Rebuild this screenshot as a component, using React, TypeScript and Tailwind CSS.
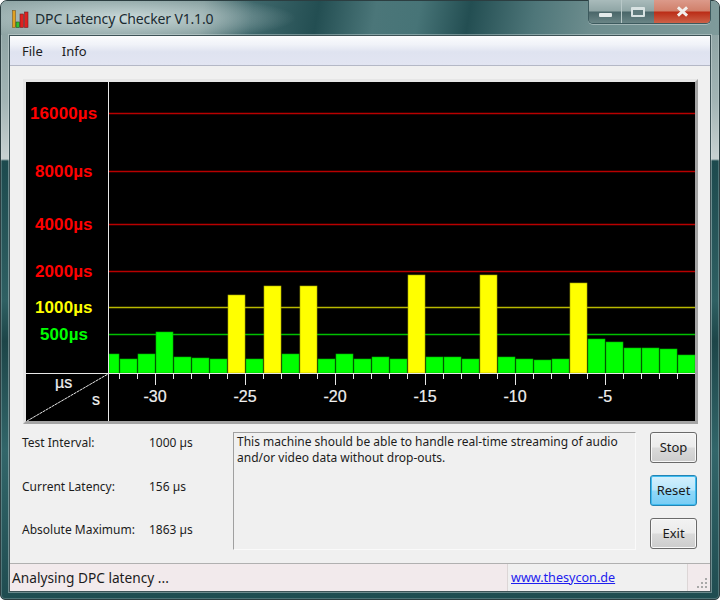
const bars = [
  [109, 10, 354, 0], [120, 17, 359, 0], [138, 17, 354, 0], [156, 17, 332, 0], [174, 17, 357, 0], [192, 17, 358, 0],
  [210, 17, 359, 0], [228, 17, 295, 1], [246, 17, 359, 0], [264, 17, 286, 1], [282, 17, 354, 0], [300, 17, 286, 1],
  [318, 17, 359, 0], [336, 17, 354, 0], [354, 17, 359, 0], [372, 17, 357, 0], [390, 17, 359, 0], [408, 17, 275, 1],
  [426, 17, 357, 0], [444, 17, 357, 0], [462, 17, 359, 0], [480, 17, 275, 1], [498, 17, 357, 0], [516, 17, 359, 0],
  [534, 17, 360, 0], [552, 17, 359, 0], [570, 17, 283, 1], [588, 17, 339, 0], [606, 17, 342, 0], [624, 17, 348, 0],
  [642, 17, 348, 0], [660, 17, 349, 0], [678, 17, 355, 0],
]

const levels = [
  { y: 113.5, label: "16000µs", x: 30, line: "#b80000", text: "#ff0000" },
  { y: 171.5, label: "8000µs", x: 35, line: "#b80000", text: "#ff0000" },
  { y: 224.5, label: "4000µs", x: 35, line: "#b80000", text: "#ff0000" },
  { y: 271.5, label: "2000µs", x: 35, line: "#b80000", text: "#ff0000" },
  { y: 307.5, label: "1000µs", x: 35, line: "#b8b800", text: "#ffff00" },
  { y: 334.5, label: "500µs", x: 40, line: "#00c000", text: "#00ff00" },
]

const seconds = [
  { x: 155, label: "-30" },
  { x: 245, label: "-25" },
  { x: 335, label: "-20" },
  { x: 425, label: "-15" },
  { x: 515, label: "-10" },
  { x: 605, label: "-5" },
]

function Chart() {
  const ticks = []
  for (let x = 119; x < 690; x += 18) ticks.push(x)
  return (
    <svg viewBox="26 82 669 339" className="block h-[339px] w-[669px] bg-black">
      {levels.map(l => (
        <g key={l.label}>
          <line x1="108" x2="695" y1={l.y} y2={l.y} stroke={l.line} strokeWidth="1.5" />
          <text x={l.x} y={l.y + 5} fill={l.text} fontSize="17" fontWeight="bold" letterSpacing="0.1" fontFamily="Liberation Sans">{l.label}</text>
        </g>
      ))}
      {bars.map(([x, w, top, high]) => (
        <rect key={x} x={x} y={top} width={w} height={373 - top} fill={high ? "#ffff00" : "#00ff00"} stroke={high ? "#a8a800" : "#00b000"} strokeWidth="0.6" />
      ))}
      <line x1="108.5" x2="108.5" y1="82" y2="421" stroke="#e8e8e8" />
      <line x1="26" x2="695" y1="373.5" y2="373.5" stroke="#e8e8e8" />
      <line x1="27" x2="108" y1="421" y2="374" stroke="#e8e8e8" strokeDasharray="3 0.6" />
      {ticks.map(x => (
        <line key={x} x1={x + 0.5} x2={x + 0.5} y1="374" y2={(x - 119) % 90 === 36 ? 385 : 379} stroke="#e8e8e8" />
      ))}
      {seconds.map(s => (
        <text key={s.label} x={s.x} y="402" fill="#f0f0f0" stroke="#f0f0f0" strokeWidth="0.2" fontSize="16" textAnchor="middle" fontFamily="Liberation Sans">{s.label}</text>
      ))}
      <text x="55" y="388" fill="#f0f0f0" stroke="#f0f0f0" strokeWidth="0.2" fontSize="16" fontFamily="Liberation Sans">µs</text>
      <text x="92" y="405" fill="#f0f0f0" stroke="#f0f0f0" strokeWidth="0.2" fontSize="16" fontFamily="Liberation Sans">s</text>
    </svg>
  )
}

function AppIcon() {
  return (
    <svg viewBox="0 0 18 18" className="h-[18px] w-[18px] shrink-0">
      <rect x="0.5" y="0.5" width="3" height="17" fill="#e0a020" stroke="#7a5a20" strokeWidth="0.6" />
      <rect x="4" y="12" width="3.5" height="5.5" fill="#30c030" stroke="#205020" strokeWidth="0.6" />
      <rect x="8" y="4" width="3.5" height="13.5" fill="#e02020" stroke="#702020" strokeWidth="0.6" />
      <rect x="12.5" y="2" width="3.5" height="15.5" fill="#e02020" stroke="#702020" strokeWidth="0.6" />
    </svg>
  )
}

function WindowButtons() {
  return (
    <div className="-mt-px flex h-[24px] self-start overflow-hidden rounded-b-[5px] border border-t-0 border-[#3d5a5e] shadow-[0_1px_0_rgba(255,255,255,0.35)]">
      <div className="flex w-[33px] items-center justify-center border-r border-[#b8c8c8] bg-[linear-gradient(#a9bbbb_0%,#8fa5a5_48%,#4a6669_52%,#6a8586_100%)]">
        <div className="mt-[7px] h-[4px] w-[13px] rounded-[1px] bg-[#e4eaea]" />
      </div>
      <div className="flex w-[32px] items-center justify-center bg-[linear-gradient(#a9bbbb_0%,#8fa5a5_48%,#4a6669_52%,#6a8586_100%)]">
        <div className="h-[10px] w-[14px] rounded-[1px] border-[2px] border-t-[3px] border-[#d8e2e2] bg-[#5f7a7c]" />
      </div>
      <div className="flex w-[56px] items-center justify-center bg-[linear-gradient(#dc9a8a_0%,#d07f6a_48%,#bb2c16_52%,#cc6248_100%)]">
        <svg viewBox="0 0 14 12" className="h-[11px] w-[13px]">
          <path d="M2 1.5 12 10.5M12 1.5 2 10.5" stroke="#f2efec" strokeWidth="3.2" fill="none" />
        </svg>
      </div>
    </div>
  )
}

function PushButton({ label, active }: { label: string; active?: boolean }) {
  return (
    <button
      className={active
        ? "h-[31px] w-[47px] rounded-[3px] border border-[#2484b4] bg-[linear-gradient(#d4f0fd_0%,#b8e6fb_48%,#90d8f9_52%,#78ccf4_100%)] text-[13px] text-[#1a1a1a] shadow-[inset_0_0_0_1px_#3fbcf0]"
        : "h-[31px] w-[47px] rounded-[3px] border border-[#6a6a6a] bg-[linear-gradient(#f2f2f2_0%,#ebebeb_48%,#dadada_52%,#cccccc_100%)] text-[13px] text-[#1a1a1a] shadow-[inset_0_0_0_1px_#f8f8f8]"}
    >
      {label}
    </button>
  )
}

const stats = [
  ["Test Interval:", "1000 µs"],
  ["Current Latency:", "156 µs"],
  ["Absolute Maximum:", "1863 µs"],
]

export default function App() {
  return (
    <div className="flex h-[600px] w-[720px] flex-col rounded-t-[7px] rounded-b-[5px] border border-[#2c3e41] bg-[linear-gradient(180deg,#7f9797_0px,#8ea4a4_30px,#a3b5b5_100px,#c8d2d2_158px,#1d4a4e_160px,#2f6063_300px,#1d4548_340px,#32666a_450px,#1f4c50_600px)] font-['Noto_Sans',sans-serif] text-[12px] text-[#1c1c1c] shadow-[inset_0_0_0_1px_rgba(220,230,230,0.25)]">
      <div className="flex h-[34px] shrink-0 rounded-t-[6px] bg-[radial-gradient(ellipse_170px_24px_at_125px_17px,rgba(205,220,220,0.95),rgba(205,220,220,0)),linear-gradient(100deg,#8fa5a5_0%,#7d9797_28%,#3f686c_35%,#234e52_44%,#4b7679_52%,#477477_58%,#234e52_65%,#4e7679_74%,#6d8d8e_82%,#7f9b9b_100%)] pl-[11px] pr-[8px]">
        <div className="flex h-[35px] items-center gap-[5px]">
          <AppIcon />
          <span className="text-[14px] tracking-[-0.15px] text-[#1a2a30]">DPC Latency Checker V1.1.0</span>
        </div>
        <div className="ml-auto">
          <WindowButtons />
        </div>
      </div>

      <div className="mx-[8px] mb-[7px] flex min-h-0 flex-1 flex-col border border-[#3d5256] bg-[#f0f0f0] shadow-[0_0_0_1px_rgba(220,230,230,0.4)]">
        <div className="flex h-[30px] shrink-0 items-center gap-[19px] border-b border-[#b4b8c6] bg-[linear-gradient(#fbfcfd_0%,#f0f2f8_30%,#dfe3f0_55%,#e2e5f2_100%)] px-[12px] pt-[2px] text-[13px]">
          <span>File</span>
          <span>Info</span>
        </div>

        <div className="flex flex-1 flex-col pl-[13px] pr-[12px] pt-[13px]">
          <div className="border-[3px] border-t-[#e6e6e6] border-l-[#e6e6e6] border-r-[#a4a4a4] border-b-[#a4a4a4]">
            <Chart />
          </div>

          <div className="mt-[8px] flex h-[118px]">
            <div className="-ml-px flex w-[211px] shrink-0 flex-col gap-[25.5px] pt-[2px]">
              {stats.map(([label, value]) => (
                <div key={label} className="flex h-[18px] items-center">
                  <span className="w-[127px]">{label}</span>
                  <span>{value}</span>
                </div>
              ))}
            </div>
            <div className="h-[118px] w-[403px] border border-[#a0a0a0] border-r-[#fafafa] border-b-[#fafafa] px-[3px] pt-[1px] leading-[16px]">
              This machine should be able to handle real-time streaming of audio and/or video data without drop-outs.
            </div>
            <div className="ml-[14px] flex flex-col gap-[12px]">
              <PushButton label="Stop" />
              <PushButton label="Reset" active />
              <PushButton label="Exit" />
            </div>
          </div>
        </div>

        <div className="flex h-[28px] shrink-0 items-center border-t border-[#b0b0b0] bg-[#f2eaec]">
          <span className="w-[497px] pl-[2px] pt-[2px] text-[13.7px]">Analysing DPC latency ...</span>
          <div className="flex h-full w-[181px] items-center border-x border-[#dcd6d6] bg-[#f0f0f0] pl-[3px] pt-[2px] text-[12.6px] text-[#2020ee] underline">www.thesycon.de</div>
          <div className="flex h-full flex-1 items-end justify-end pb-[2px] pr-[2px]">
            <svg viewBox="0 0 12 12" className="h-[12px] w-[12px]" fill="#a8a8a8">
              <rect x="9" y="1" width="2" height="2" /><rect x="5" y="5" width="2" height="2" /><rect x="9" y="5" width="2" height="2" />
              <rect x="1" y="9" width="2" height="2" /><rect x="5" y="9" width="2" height="2" /><rect x="9" y="9" width="2" height="2" />
            </svg>
          </div>
        </div>
      </div>
    </div>
  )
}
